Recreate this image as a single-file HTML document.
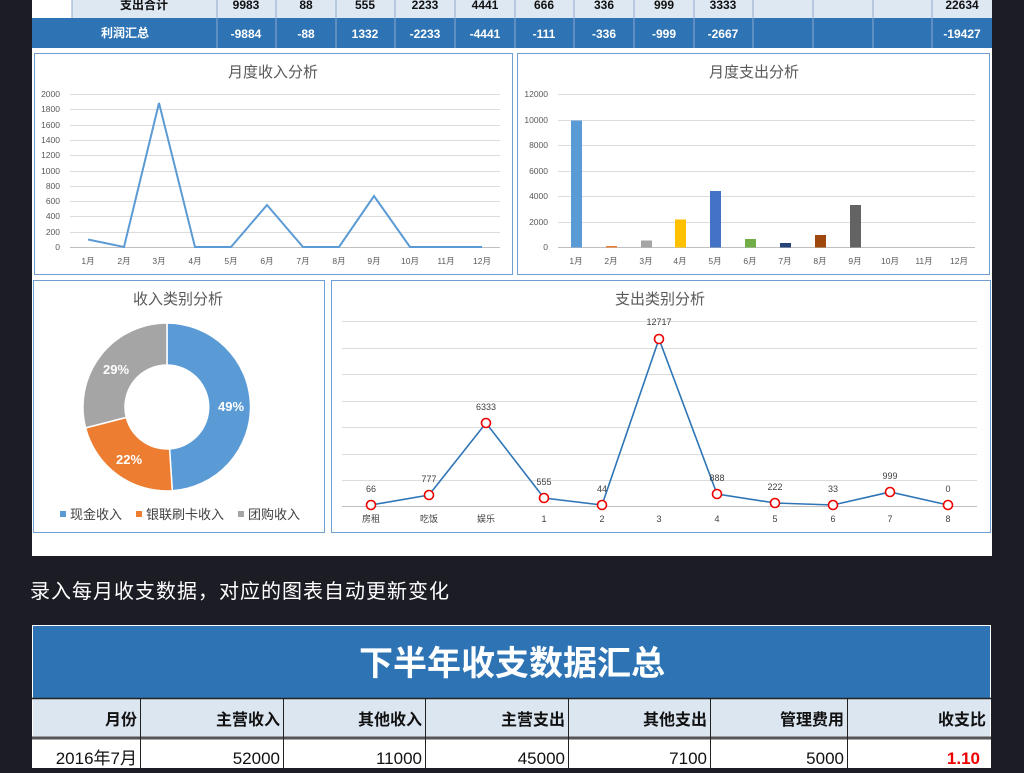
<!DOCTYPE html>
<html><head><meta charset="utf-8"><style>
body{margin:0;width:1024px;height:768px;background:#1c1d24;overflow:hidden;font-family:"Liberation Sans","Noto Sans CJK SC",sans-serif}
svg text{font-family:"Liberation Sans","Noto Sans CJK SC",sans-serif}
</style></head><body>
<svg width="1024" height="768" viewBox="0 0 1024 768" xmlns="http://www.w3.org/2000/svg">
<rect x="32" y="0" width="960" height="556" fill="#fff"/>
<!-- top table -->
<rect x="72" y="0" width="920" height="18" fill="#dde8f3"/>
<rect x="32" y="18" width="960" height="30" fill="#2e74b5"/>
<g stroke="#8eaacc" stroke-width="1">
<line x1="72" y1="0" x2="72" y2="18"/>
<line x1="217" y1="0" x2="217" y2="48"/><line x1="276" y1="0" x2="276" y2="48"/><line x1="336" y1="0" x2="336" y2="48"/><line x1="395" y1="0" x2="395" y2="48"/><line x1="455" y1="0" x2="455" y2="48"/><line x1="515" y1="0" x2="515" y2="48"/><line x1="574" y1="0" x2="574" y2="48"/><line x1="634" y1="0" x2="634" y2="48"/><line x1="694" y1="0" x2="694" y2="48"/><line x1="753" y1="0" x2="753" y2="48"/><line x1="813" y1="0" x2="813" y2="48"/><line x1="873" y1="0" x2="873" y2="48"/><line x1="932" y1="0" x2="932" y2="48"/>
</g>
<g font-size="12" font-weight="bold" text-anchor="middle" fill="#111">
<text x="144" y="9">支出合计</text><text x="246" y="9">9983</text><text x="306" y="9">88</text><text x="365" y="9">555</text><text x="425" y="9">2233</text><text x="485" y="9">4441</text><text x="544" y="9">666</text><text x="604" y="9">336</text><text x="664" y="9">999</text><text x="723" y="9">3333</text><text x="962" y="9">22634</text>
</g>
<g font-size="12" font-weight="bold" text-anchor="middle" fill="#fff">
<text x="125" y="37">利润汇总</text><text x="246" y="38">-9884</text><text x="306" y="38">-88</text><text x="365" y="38">1332</text><text x="425" y="38">-2233</text><text x="485" y="38">-4441</text><text x="544" y="38">-111</text><text x="604" y="38">-336</text><text x="664" y="38">-999</text><text x="723" y="38">-2667</text><text x="962" y="38">-19427</text>
</g>
<!-- chart boxes -->
<g fill="none" stroke="#6f9fd0" stroke-width="1">
<rect x="34.5" y="53.5" width="478" height="221"/>
<rect x="517.5" y="53.5" width="472" height="221"/>
<rect x="33.5" y="280.5" width="291" height="252"/>
<rect x="331.5" y="280.5" width="659" height="252"/>
</g>
<g font-size="15" fill="#595959" text-anchor="middle">
<text x="273" y="77">月度收入分析</text><text x="754" y="77">月度支出分析</text>
<text x="178" y="304">收入类别分析</text><text x="660" y="304">支出类别分析</text>
</g>
<!-- chart1 -->
<g stroke="#dcdcdc" stroke-width="1">
<line x1="70" y1="94.5" x2="500" y2="94.5"/><line x1="70" y1="109.5" x2="500" y2="109.5"/><line x1="70" y1="125.5" x2="500" y2="125.5"/><line x1="70" y1="140.5" x2="500" y2="140.5"/><line x1="70" y1="155.5" x2="500" y2="155.5"/><line x1="70" y1="171.5" x2="500" y2="171.5"/><line x1="70" y1="186.5" x2="500" y2="186.5"/><line x1="70" y1="201.5" x2="500" y2="201.5"/><line x1="70" y1="216.5" x2="500" y2="216.5"/><line x1="70" y1="232.5" x2="500" y2="232.5"/><line x1="70" y1="247.5" x2="500" y2="247.5" stroke="#bfbfbf"/>
</g>
<g font-size="8.5" fill="#595959" text-anchor="end">
<text x="60" y="97">2000</text><text x="60" y="112">1800</text><text x="60" y="128">1600</text><text x="60" y="143">1400</text><text x="60" y="158">1200</text><text x="60" y="174">1000</text><text x="60" y="189">800</text><text x="60" y="204">600</text><text x="60" y="219">400</text><text x="60" y="235">200</text><text x="60" y="250">0</text>
</g>
<g font-size="8.5" fill="#595959" text-anchor="middle">
<text x="88" y="264">1月</text><text x="124" y="264">2月</text><text x="159" y="264">3月</text><text x="195" y="264">4月</text><text x="231" y="264">5月</text><text x="267" y="264">6月</text><text x="303" y="264">7月</text><text x="339" y="264">8月</text><text x="374" y="264">9月</text><text x="410" y="264">10月</text><text x="446" y="264">11月</text><text x="482" y="264">12月</text>
</g>
<polyline fill="none" stroke="#5b9bd5" stroke-width="2" points="88,239.5 124,247 159,103 195,247 231,247 267,205 303,247 339,247 374,196 410,247 446,247 482,247"/>
<!-- chart2 -->
<g stroke="#dcdcdc" stroke-width="1">
<line x1="558" y1="94.5" x2="975" y2="94.5"/><line x1="558" y1="120.5" x2="975" y2="120.5"/><line x1="558" y1="145.5" x2="975" y2="145.5"/><line x1="558" y1="171.5" x2="975" y2="171.5"/><line x1="558" y1="196.5" x2="975" y2="196.5"/><line x1="558" y1="222.5" x2="975" y2="222.5"/><line x1="558" y1="247.5" x2="975" y2="247.5" stroke="#bfbfbf"/>
</g>
<g font-size="8.5" fill="#595959" text-anchor="end">
<text x="548" y="97">12000</text><text x="548" y="123">10000</text><text x="548" y="148">8000</text><text x="548" y="174">6000</text><text x="548" y="199">4000</text><text x="548" y="225">2000</text><text x="548" y="250">0</text>
</g>
<g font-size="8.5" fill="#595959" text-anchor="middle">
<text x="576" y="264">1月</text><text x="611" y="264">2月</text><text x="646" y="264">3月</text><text x="680" y="264">4月</text><text x="715" y="264">5月</text><text x="750" y="264">6月</text><text x="785" y="264">7月</text><text x="820" y="264">8月</text><text x="855" y="264">9月</text><text x="890" y="264">10月</text><text x="924" y="264">11月</text><text x="959" y="264">12月</text>
</g>
<rect x="571" y="120.5" width="11" height="127" fill="#5b9bd5"/>
<rect x="606" y="246" width="11" height="1.5" fill="#ed7d31"/>
<rect x="641" y="240.5" width="11" height="7" fill="#a5a5a5"/>
<rect x="675" y="219.5" width="11" height="28" fill="#ffc000"/>
<rect x="710" y="191" width="11" height="56.5" fill="#4472c4"/>
<rect x="745" y="239" width="11" height="8.5" fill="#70ad47"/>
<rect x="780" y="243" width="11" height="4.5" fill="#264478"/>
<rect x="815" y="235" width="11" height="12.5" fill="#9e480e"/>
<rect x="850" y="205" width="11" height="42.5" fill="#636363"/>
<!-- donut -->
<path d="M167,323 A84,84 0 0 1 172.3,490.8 L169.6,448.9 A42,42 0 0 0 167,365 Z" fill="#5b9bd5" stroke="#fff" stroke-width="1.5"/>
<path d="M172.3,490.8 A84,84 0 0 1 85.6,427.9 L126.3,417.4 A42,42 0 0 0 169.6,448.9 Z" fill="#ed7d31" stroke="#fff" stroke-width="1.5"/>
<path d="M85.6,427.9 A84,84 0 0 1 167,323 L167,365 A42,42 0 0 0 126.3,417.4 Z" fill="#a5a5a5" stroke="#fff" stroke-width="1.5"/>
<g font-size="13" font-weight="bold" fill="#fff" text-anchor="middle">
<text x="231" y="411">49%</text><text x="129" y="464">22%</text><text x="116" y="374">29%</text>
</g>
<g font-size="13" fill="#404040">
<rect x="60" y="511" width="6" height="6" fill="#5b9bd5"/><text x="70" y="519">现金收入</text>
<rect x="136" y="511" width="6" height="6" fill="#ed7d31"/><text x="146" y="519">银联刷卡收入</text>
<rect x="238" y="511" width="6" height="6" fill="#a5a5a5"/><text x="248" y="519">团购收入</text>
</g>
<!-- chart4 -->
<g stroke="#dcdcdc" stroke-width="1">
<line x1="342" y1="321.5" x2="977" y2="321.5"/><line x1="342" y1="348.5" x2="977" y2="348.5"/><line x1="342" y1="374.5" x2="977" y2="374.5"/><line x1="342" y1="401.5" x2="977" y2="401.5"/><line x1="342" y1="427.5" x2="977" y2="427.5"/><line x1="342" y1="454.5" x2="977" y2="454.5"/><line x1="342" y1="480.5" x2="977" y2="480.5"/><line x1="342" y1="506.5" x2="977" y2="506.5" stroke="#bfbfbf"/>
</g>
<polyline fill="none" stroke="#2e75b6" stroke-width="1.6" points="371,505 429,495 486,423 544,498 602,505 659,339 717,494 775,503 833,505 890,492 948,505"/>
<g fill="#fff" stroke="#e00" stroke-width="1.6">
<circle cx="371" cy="505" r="4.5"/><circle cx="429" cy="495" r="4.5"/><circle cx="486" cy="423" r="4.5"/><circle cx="544" cy="498" r="4.5"/><circle cx="602" cy="505" r="4.5"/><circle cx="659" cy="339" r="4.5"/><circle cx="717" cy="494" r="4.5"/><circle cx="775" cy="503" r="4.5"/><circle cx="833" cy="505" r="4.5"/><circle cx="890" cy="492" r="4.5"/><circle cx="948" cy="505" r="4.5"/>
</g>
<g font-size="9" fill="#404040" text-anchor="middle">
<text x="371" y="492">66</text><text x="429" y="482">777</text><text x="486" y="410">6333</text><text x="544" y="485">555</text><text x="602" y="492">44</text><text x="659" y="325">12717</text><text x="717" y="481">888</text><text x="775" y="490">222</text><text x="833" y="492">33</text><text x="890" y="479">999</text><text x="948" y="492">0</text>
<text x="371" y="522">房租</text><text x="429" y="522">吃饭</text><text x="486" y="522">娱乐</text><text x="544" y="522">1</text><text x="602" y="522">2</text><text x="659" y="522">3</text><text x="717" y="522">4</text><text x="775" y="522">5</text><text x="833" y="522">6</text><text x="890" y="522">7</text><text x="948" y="522">8</text>
</g>
<!-- caption -->
<text x="30" y="598" font-size="20" fill="#fff" letter-spacing="1">录入每月收支数据，对应的图表自动更新变化</text>
<!-- bottom table -->
<rect x="32" y="625" width="959" height="143" fill="#fff"/>
<rect x="33" y="626" width="957" height="72" fill="#2e74b5"/>
<text x="512" y="675" font-size="34" font-weight="bold" fill="#fff" text-anchor="middle">下半年收支数据汇总</text>
<rect x="33" y="699" width="957" height="38" fill="#dce6f1"/>
<line x1="32" y1="698.5" x2="991" y2="698.5" stroke="#222" stroke-width="1.5"/>
<line x1="32" y1="738" x2="991" y2="738" stroke="#555" stroke-width="3"/>
<g stroke="#222" stroke-width="1">
<line x1="140.5" y1="699" x2="140.5" y2="768"/><line x1="283.5" y1="699" x2="283.5" y2="768"/><line x1="425.5" y1="699" x2="425.5" y2="768"/><line x1="568.5" y1="699" x2="568.5" y2="768"/><line x1="710.5" y1="699" x2="710.5" y2="768"/><line x1="847.5" y1="699" x2="847.5" y2="768"/>
</g>
<g font-size="16" font-weight="bold" fill="#111" text-anchor="end">
<text x="137" y="725">月份</text><text x="280" y="725">主营收入</text><text x="422" y="725">其他收入</text><text x="565" y="725">主营支出</text><text x="707" y="725">其他支出</text><text x="844" y="725">管理费用</text><text x="986" y="725">收支比</text>
</g>
<g font-size="17" fill="#111" text-anchor="end">
<text x="137" y="764">2016年7月</text><text x="280" y="764">52000</text><text x="422" y="764">11000</text><text x="565" y="764">45000</text><text x="707" y="764">7100</text><text x="844" y="764">5000</text>
<text x="980" y="764" fill="#e00" font-weight="bold">1.10</text>
</g>
</svg>
</body></html>
